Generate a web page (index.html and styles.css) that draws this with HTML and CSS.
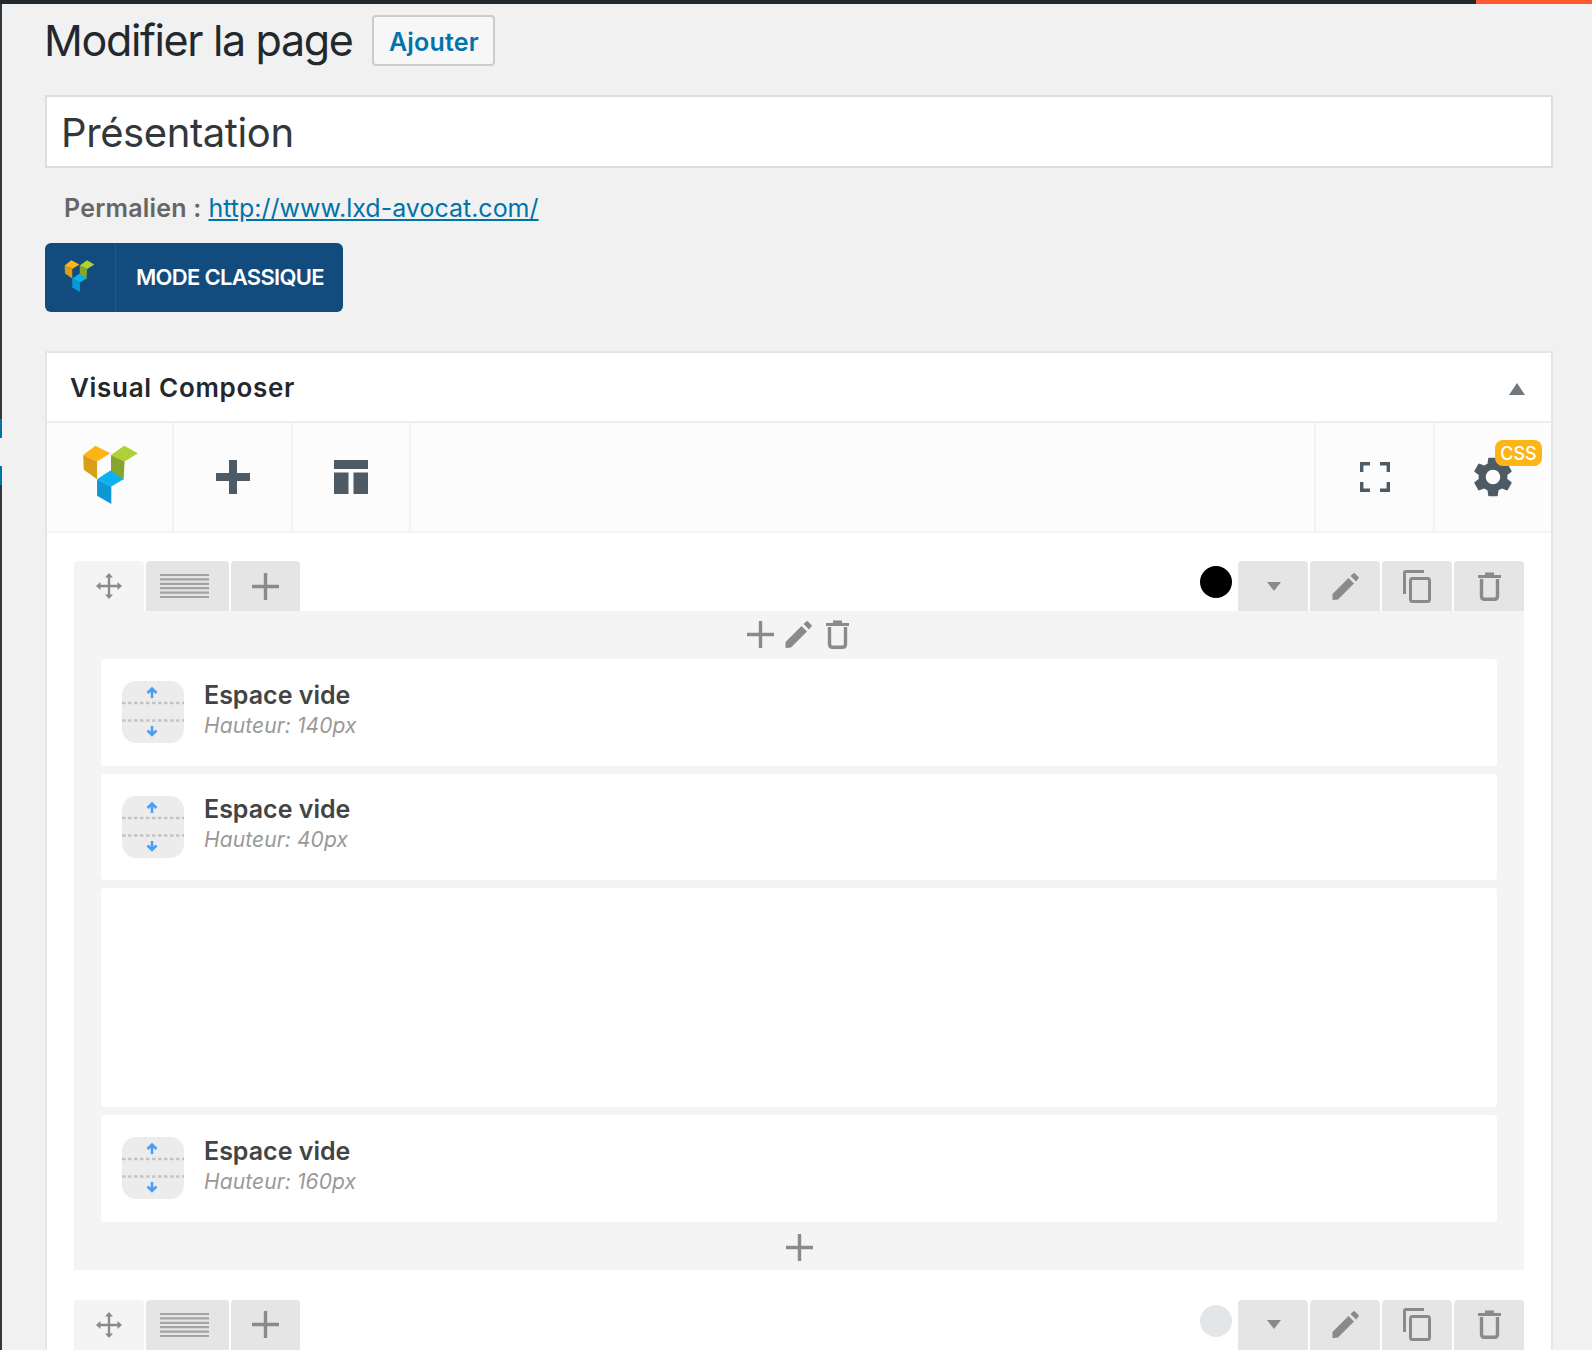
FILE: index.html
```html
<!DOCTYPE html>
<html lang="fr">
<head>
<meta charset="utf-8">
<title>Modifier la page</title>
<link rel="stylesheet" href="styles.css">
</head>
<body>
<svg class="defs" width="0" height="0" aria-hidden="true">
  <symbol id="i-logo" viewBox="128 75 165 178">
    <path fill="#fdb515" d="M128 105L165 77L210 100L170 125Z"/>
    <path fill="#d99e14" d="M128 105L170 125V178L130 150Z"/>
    <path fill="#aed136" d="M212 105L252 77L293 100L253 125Z"/>
    <path fill="#86a52c" d="M212 105L253 125L250 180L212 155Z"/>
    <path fill="#0db1f2" d="M170 178L210 152L250 178L213 200Z"/>
    <path fill="#0e98d3" d="M170 178L213 200V253L170 228Z"/>
  </symbol>
  <symbol id="i-move" viewBox="0 0 26 26">
    <path fill="none" stroke="currentColor" stroke-width="2.4" d="M13 3V23M3 13H23"/>
    <path fill="currentColor" d="M13 0L17 4.5H9ZM13 26L9 21.500H17ZM0 13L4.500 9V17ZM26 13L21.500 17V9Z"/>
  </symbol>
  <symbol id="i-lines" viewBox="0 0 49 24">
    <path fill="none" stroke="#a3a3a3" stroke-width="2.200" d="M0 1H49M0 5.400H49M0 9.800H49M0 14.200H49M0 18.600H49M0 23H49"/>
  </symbol>
  <symbol id="i-plus" viewBox="0 0 27 27">
    <path fill="none" stroke="currentColor" stroke-width="3.400" d="M13.500 0V27M0 13.500H27"/>
  </symbol>
  <symbol id="i-caret" viewBox="0 0 14 9">
    <path fill="currentColor" d="M0 0H14L7 9Z"/>
  </symbol>
  <symbol id="i-pencil" viewBox="0 0 27 27">
    <path fill="currentColor" d="M0.500 21L16.500 5L22 10.500L6 26.500L1.500 27Q0 27 0.500 25ZM18.500 3L21.500 0.300Q22.300 -0.200 23 0.500L26.500 4Q27.200 4.800 26.500 5.500L24 8.500Z"/>
  </symbol>
  <symbol id="i-copy" viewBox="0 0 28 33">
    <path fill="none" stroke="currentColor" stroke-width="3" d="M1.500 24V3Q1.500 1.500 3 1.500H21"/>
    <rect fill="none" stroke="currentColor" stroke-width="3" x="7.500" y="8.500" width="19" height="23" rx="2"/>
  </symbol>
  <symbol id="i-trash" viewBox="0 0 23 29">
    <path fill="none" stroke="currentColor" stroke-width="3" d="M0 4.500H23M7 2H16"/>
    <path fill="none" stroke="currentColor" stroke-width="3.400" d="M3.500 7V24Q3.500 27.300 6.500 27.300H16.500Q19.500 27.300 19.500 24V7"/>
  </symbol>
  <symbol id="i-gear" viewBox="2.500 2 19 20">
    <path fill="currentColor" d="M19.140 12.940c.04-.3.06-.61.06-.94 0-.32-.02-.64-.07-.94l2.030-1.580c.18-.14.23-.41.12-.61l-1.920-3.320c-.12-.22-.37-.29-.59-.22l-2.390.96c-.5-.38-1.030-.7-1.620-.94l-.36-2.540c-.04-.24-.24-.41-.48-.41h-3.840c-.24 0-.43.17-.47.41l-.36 2.540c-.59.24-1.130.57-1.620.94l-2.390-.96c-.22-.08-.47 0-.59.22L2.740 8.870c-.12.21-.08.47.12.61l2.030 1.580c-.05.3-.09.63-.09.94s.02.64.07.94l-2.030 1.580c-.18.14-.23.41-.12.61l1.920 3.320c.12.22.37.29.59.22l2.390-.96c.5.38 1.030.7 1.620.94l.36 2.540c.05.24.24.41.48.41h3.840c.24 0 .44-.17.47-.41l.36-2.540c.59-.24 1.130-.56 1.620-.94l2.390.96c.22.08.47 0 .59-.22l1.920-3.320c.12-.22.07-.47-.12-.61l-2.010-1.580zM12 15.600c-1.980 0-3.600-1.620-3.600-3.600s1.620-3.600 3.600-3.600 3.600 1.620 3.600 3.600-1.620 3.600-3.600 3.600z"/>
  </symbol>
  <symbol id="i-expand" viewBox="0 0 30 30">
    <path fill="none" stroke="currentColor" stroke-width="3.400" d="M1.700 10V1.700H10M20 1.700H28.300V10M1.700 20V28.300H10M20 28.300H28.300V20"/>
  </symbol>
  <symbol id="i-layout" viewBox="0 0 34 34">
    <path fill="currentColor" d="M0 0H34V9H0ZM0 12.500H14.500V34H0ZM19.500 12.500H34V34H19.500Z"/>
  </symbol>
  <symbol id="i-add-bold" viewBox="0 0 34 34">
    <path fill="currentColor" d="M13 0H21V13H34V21H21V34H13V21H0V13H13Z"/>
  </symbol>
  <symbol id="i-spacer" viewBox="0 0 62 62">
    <path fill="none" stroke="#c4c4c4" stroke-width="2.500" stroke-dasharray="3.500 2.500" d="M0 22H62M0 39.500H62"/>
    <path fill="none" stroke="#4a9ff5" stroke-width="2.600" d="M30 8V17M25.500 12L30 7.500L34.500 12M30 45V54M25.500 49.500L30 54L34.500 49.500"/>
  </symbol>
</svg>

<div class="adminbar"><span class="adminbar-dark"></span><span class="adminbar-accent"></span></div>

<div class="page">
  <div class="rail">
    <span class="rail-dark rail-first"></span>
    <span class="rail-blue"></span>
    <span class="rail-gap"></span>
    <span class="rail-blue"></span>
    <span class="rail-dark rail-last"></span>
  </div>

  <main class="main">
    <div class="title-row">
      <h1 class="page-title">Modifier la page</h1>
      <a class="add-button">Ajouter</a>
    </div>

    <div class="title-field">Présentation</div>

    <p class="permalink"><strong class="permalink-label">Permalien :</strong> <a class="permalink-url">http://www.lxd-avocat.com/</a></p>

    <a class="classic-button">
      <span class="classic-icon"><svg class="logo-small"><use href="#i-logo"/></svg></span>
      <span class="classic-label">MODE CLASSIQUE</span>
    </a>

    <section class="panel">
      <header class="panel-head">
        <h2 class="panel-title">Visual Composer</h2>
        <span class="panel-toggle"></span>
      </header>

      <div class="toolbar">
        <div class="tool tool-logo"><svg class="logo-big"><use href="#i-logo"/></svg></div>
        <div class="tool"><svg class="tool-icon"><use href="#i-add-bold"/></svg></div>
        <div class="tool tool-third"><svg class="tool-icon"><use href="#i-layout"/></svg></div>
        <div class="tool-space"></div>
        <div class="tool tool-right"><svg class="tool-expand"><use href="#i-expand"/></svg></div>
        <div class="tool tool-last">
          <svg class="tool-gear"><use href="#i-gear"/></svg>
          <span class="css-badge">CSS</span>
        </div>
      </div>

      <div class="canvas">
        <div class="row">
          <div class="row-head">
            <span class="tab tab-move"><svg class="ico-move"><use href="#i-move"/></svg></span>
            <span class="tab tab-lines"><svg class="ico-lines"><use href="#i-lines"/></svg></span>
            <span class="tab tab-add"><svg class="ico-plus"><use href="#i-plus"/></svg></span>
            <span class="row-space"></span>
            <span class="dot dot-black"></span>
            <span class="tab tab-side"><svg class="ico-caret"><use href="#i-caret"/></svg></span>
            <span class="tab tab-side"><svg class="ico-pencil"><use href="#i-pencil"/></svg></span>
            <span class="tab tab-side"><svg class="ico-copy"><use href="#i-copy"/></svg></span>
            <span class="tab tab-side"><svg class="ico-trash"><use href="#i-trash"/></svg></span>
          </div>
          <div class="row-body">
            <div class="column-controls">
              <svg class="ico-plus"><use href="#i-plus"/></svg>
              <svg class="ico-pencil"><use href="#i-pencil"/></svg>
              <svg class="ico-trash control-trash"><use href="#i-trash"/></svg>
            </div>
            <div class="elements">
              <div class="element">
                <svg class="spacer-icon"><use href="#i-spacer"/></svg>
                <div class="element-text"><div class="element-name">Espace vide</div><div class="element-meta">Hauteur: 140px</div></div>
              </div>
              <div class="element">
                <svg class="spacer-icon"><use href="#i-spacer"/></svg>
                <div class="element-text"><div class="element-name">Espace vide</div><div class="element-meta">Hauteur: 40px</div></div>
              </div>
              <div class="element element-empty"></div>
              <div class="element">
                <svg class="spacer-icon"><use href="#i-spacer"/></svg>
                <div class="element-text"><div class="element-name">Espace vide</div><div class="element-meta">Hauteur: 160px</div></div>
              </div>
            </div>
            <div class="column-foot"><svg class="ico-plus"><use href="#i-plus"/></svg></div>
          </div>
        </div>

        <div class="row">
          <div class="row-head">
            <span class="tab tab-move"><svg class="ico-move"><use href="#i-move"/></svg></span>
            <span class="tab tab-lines"><svg class="ico-lines"><use href="#i-lines"/></svg></span>
            <span class="tab tab-add"><svg class="ico-plus"><use href="#i-plus"/></svg></span>
            <span class="row-space"></span>
            <span class="dot dot-grey"></span>
            <span class="tab tab-side"><svg class="ico-caret"><use href="#i-caret"/></svg></span>
            <span class="tab tab-side"><svg class="ico-pencil"><use href="#i-pencil"/></svg></span>
            <span class="tab tab-side"><svg class="ico-copy"><use href="#i-copy"/></svg></span>
            <span class="tab tab-side"><svg class="ico-trash"><use href="#i-trash"/></svg></span>
          </div>
        </div>
      </div>
    </section>
  </main>
</div>
</body>
</html>
```
FILE: styles.css
```css
* { box-sizing: border-box; }

html, body {
  margin: 0;
  height: 1350px;
  overflow: hidden;
  background: #f1f1f1;
  font-family: Inter, "Liberation Sans", sans-serif;
  color: #23282d;
}

.defs { position: absolute; }

.adminbar { display: flex; height: 4px; }
.adminbar-dark { flex: 1; background: #23282d; }
.adminbar-accent { width: 116px; background: #ff5a2d; }

.page { display: flex; height: 1346px; }

.rail { width: 2px; display: flex; flex-direction: column; flex: none; }
.rail-dark { background: #32373c; }
.rail-first { height: 415px; }
.rail-last { flex: 1; }
.rail-blue { height: 19px; background: #0073aa; }
.rail-gap { height: 28px; background: #f1f1f1; }

.main { flex: 1; min-width: 0; padding: 11px 39px 0 43px; }

.title-row { display: flex; align-items: center; height: 51px; }
.page-title {
  margin: 0 0 0 -1px;
  font-size: 43px;
  font-weight: 400;
  line-height: 49px;
  letter-spacing: -1.35px;
  color: #23282d;
}
.add-button {
  margin-left: 20px;
  width: 123px;
  height: 51px;
  padding-top: 2px;
  display: flex;
  align-items: center;
  justify-content: center;
  background: #f7f7f7;
  border: 2px solid #ccc;
  border-radius: 4px;
  color: #0073aa;
  font-size: 25px;
  font-weight: 600;
  letter-spacing: 0.2px;
}

.title-field {
  margin-top: 29px;
  height: 73px;
  padding: 1px 14px 0;
  display: flex;
  align-items: center;
  background: #fff;
  border: 2px solid #ddd;
  font-size: 40px;
  letter-spacing: -0.4px;
  color: #32373c;
}

.permalink {
  margin: 25px 0 0;
  padding-left: 19px;
  height: 30px;
  line-height: 30px;
  font-size: 25px;
  color: #666;
  white-space: nowrap;
}
.permalink-label { font-weight: 600; letter-spacing: 0.2px; }
.permalink-url { color: #0073aa; text-decoration: underline; }

.classic-button {
  margin-top: 20px;
  width: 298px;
  height: 69px;
  display: flex;
  background: #124c7f;
  border-radius: 6px;
  color: #fff;
}
.classic-icon {
  width: 71px;
  border-right: 1px solid #1f5a8e;
  display: flex;
  align-items: center;
  padding-left: 19px;
}
.logo-small { width: 31px; height: 32px; margin-bottom: 3px; }
.classic-label {
  display: flex;
  align-items: center;
  padding: 0 0 1px 20px;
  font-size: 22px;
  font-weight: 600;
  letter-spacing: -0.7px;
}

.panel {
  margin-top: 39px;
  height: 1100px;
  background: #fff;
  border: 2px solid #e5e5e5;
  border-bottom: 0;
}
.panel-head {
  height: 70px;
  display: flex;
  align-items: center;
  justify-content: space-between;
  padding: 0 26px 0 23px;
  border-bottom: 2px solid #eee;
}
.panel-title { margin: 0; font-size: 26px; font-weight: 600; letter-spacing: 0.7px; color: #23282d; }
.panel-toggle {
  width: 0;
  height: 0;
  margin-top: 4px;
  border-left: 8px solid transparent;
  border-right: 8px solid transparent;
  border-bottom: 12px solid #72777c;
}

.toolbar { height: 110px; display: flex; background: #fcfcfc; border-bottom: 2px solid #f3f3f3; }
.tool {
  width: 119px;
  flex: none;
  display: flex;
  align-items: center;
  justify-content: center;
  border-right: 2px solid #f3f3f3;
  color: #4f5b64;
  position: relative;
}
.tool-logo { width: 127px; }
.tool-third { width: 118px; }
.tool-space { flex: 1; }
.tool-right { width: 121px; border-left: 2px solid #f3f3f3; border-right: 2px solid #f3f3f3; }
.tool-last { width: 116px; border-right: 0; }
.logo-big { width: 55px; height: 59px; margin: 0 0 6px 1px; }
.tool-icon { width: 34px; height: 34px; }
.tool-expand { width: 30px; height: 30px; }
.tool-gear { width: 38px; height: 40px; }
.css-badge {
  position: absolute;
  top: 17px;
  left: 60px;
  width: 47px;
  height: 26px;
  display: flex;
  align-items: center;
  justify-content: center;
  background: #fdb515;
  border-radius: 8px;
  color: #fff;
  font-size: 18px;
  font-weight: 500;
}

.canvas { padding: 28px 27px 0; }
.row { margin-bottom: 30px; color: #8a8a8a; }
.row-head { display: flex; height: 50px; gap: 2px; }
.row-space { flex: 1; }
.tab {
  display: flex;
  align-items: center;
  justify-content: center;
  background: #e5e5e5;
  border-radius: 4px 4px 0 0;
}
.tab-move { width: 70px; background: #f4f4f4; }
.tab-lines { width: 83px; padding-right: 6px; }
.tab-add { width: 69px; }
.tab-side { width: 70px; }
.dot { width: 32px; height: 32px; margin: 5px 4px 0 0; border-radius: 50%; }
.dot-black { background: #000; }
.dot-grey { background: #e4e5e7; }

.ico-move { width: 26px; height: 26px; }
.ico-lines { width: 49px; height: 24px; }
.ico-plus { width: 27px; height: 27px; }
.ico-caret { width: 14px; height: 9px; margin-left: 1px; }
.ico-pencil { width: 27px; height: 27px; }
.ico-copy { width: 28px; height: 33px; }
.ico-trash { width: 23px; height: 29px; }

.row-body { background: #f4f4f4; padding: 0 27px; }
.column-controls {
  height: 48px;
  padding: 0 2px 2px 0;
  display: flex;
  align-items: center;
  justify-content: center;
  gap: 11px;
}
.control-trash { margin-left: 3px; }
.elements { display: flex; flex-direction: column; gap: 8px; }
.element {
  height: 106.5px;
  display: flex;
  align-items: center;
  gap: 20px;
  padding-left: 21px;
  background: #fff;
  border-radius: 4px;
}
.element-empty { height: 219px; }
.spacer-icon {
  width: 62px;
  height: 62px;
  background: #ececec;
  border-radius: 14px;
}
.element-text { padding-bottom: 3px; }
.element-name { font-size: 25px; font-weight: 600; line-height: 30px; color: #444; letter-spacing: 0; }
.element-meta { font-size: 21px; font-style: italic; line-height: 32px; color: #999; letter-spacing: 0.1px; }
.column-foot {
  height: 48px;
  padding-top: 3px;
  display: flex;
  align-items: center;
  justify-content: center;
}
```
